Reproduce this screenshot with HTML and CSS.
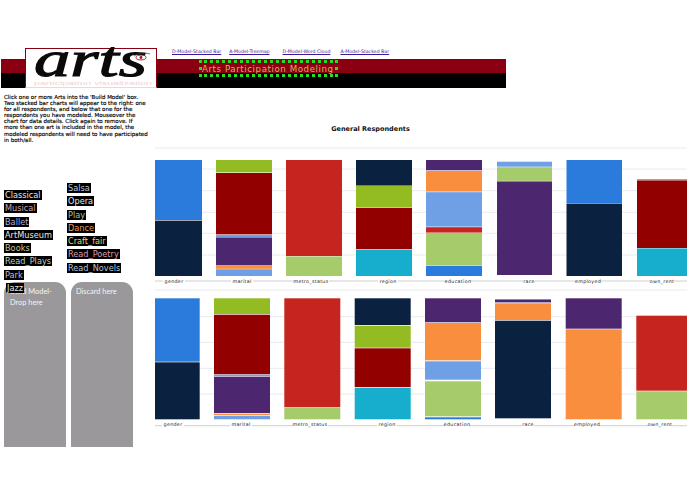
FILE: index.html
```html
<!DOCTYPE html>
<html lang="en">
<head>
<meta charset="utf-8">
<title>Arts Participation Modeling</title>
<link rel="stylesheet" href="styles.css">
</head>
<body>
<header class="header">
  <div class="band band-left"></div>
  <div class="logo">
    <svg class="logo-art" viewBox="0 0 130 38" aria-label="arts logo">
      <text class="logo-word" x="8" y="27" textLength="113" lengthAdjust="spacingAndGlyphs">arts</text>
      <ellipse class="logo-eye" cx="115" cy="8.5" rx="5" ry="2.4"/>
      <circle class="logo-pupil" cx="115" cy="8.5" r="1.4"/>
      <path class="logo-lash" d="M108 7Q115 2 124 5"/>
      <text class="logo-sub" x="8" y="36" textLength="118" lengthAdjust="spacingAndGlyphs">participation visualization</text>
    </svg>
  </div>
  <div class="header-main">
    <nav class="links">
      <a class="link link-a" href="#">D-Model-Stacked Bar</a>
      <a class="link link-b" href="#">A-Model-Treemap</a>
      <a class="link link-c" href="#">D-Model-Word Cloud</a>
      <a class="link" href="#">A-Model-Stacked Bar</a>
    </nav>
    <div class="band band-main">
      <h1 class="site-title">Arts Participation Modeling</h1>
    </div>
  </div>
</header>
<main class="main">
  <aside class="side">
    <p class="intro">Click one or more Arts into the 'Build Model' box.<br>Two stacked bar charts will appear to the right: one<br>for all respondents, and below that one for the<br>respondents you have modeled. Mouseover the<br>chart for data details. Click again to remove. If<br>more than one art is included in the model, the<br>modeled respondents will need to have participated<br>in both/all.</p>
    <div class="arts">
      <div class="art-col art-col-one">
        <span class="art c-white">Classical</span>
        <span class="art c-pink">Musical</span>
        <span class="art c-blue">Ballet</span>
        <span class="art c-white">ArtMuseum</span>
        <span class="art c-tan">Books</span>
        <span class="art c-mint">Read_Plays</span>
        <span class="art c-lilac">Park</span>
        <span class="art art-dropped c-white">Jazz</span>
      </div>
      <div class="art-col">
        <span class="art c-ice">Salsa</span>
        <span class="art c-white">Opera</span>
        <span class="art c-green">Play</span>
        <span class="art c-orange">Dance</span>
        <span class="art c-yellow">Craft_fair</span>
        <span class="art c-rose">Read_Poetry</span>
        <span class="art c-ice">Read_Novels</span>
      </div>
    </div>
    <div class="zones">
      <div class="zone zone-build">Build Model-<br>Drop here</div>
      <div class="zone">Discard here</div>
    </div>
  </aside>
  <section class="charts">
    <h2 class="chart-title">General Respondents</h2>
    <svg class="chart chart-one" viewBox="155 147 533 144">
      <g class="rules">
        <line x1="155" x2="687" y1="148" y2="148"/><line x1="155" x2="687" y1="169" y2="169"/><line x1="155" x2="687" y1="190.7" y2="190.7"/><line x1="155" x2="687" y1="212.3" y2="212.3"/><line x1="155" x2="687" y1="233.3" y2="233.3"/><line x1="155" x2="687" y1="255" y2="255"/><line x1="155" x2="687" y1="290" y2="290"/>
      </g>
      <line class="axis" x1="155" x2="687" y1="281" y2="281"/>
      <rect class="blue" x="155" y="160" width="47" height="60"/><rect class="navy" x="155" y="220.6" width="47" height="55.4"/>
      <rect class="green" x="216" y="160" width="56" height="12.4"/><rect class="maroon" x="216" y="173" width="56" height="61.4"/><rect class="lblue" x="216" y="235" width="56" height="2"/><rect class="purple" x="216" y="237.4" width="56" height="28"/><rect class="orange" x="216" y="265.8" width="56" height="3"/><rect class="lblue" x="216" y="269.2" width="56" height="6.8"/>
      <rect class="red" x="286" y="160" width="56" height="96"/><rect class="lgreen" x="286" y="256.4" width="56" height="19.6"/>
      <rect class="navy" x="356" y="160" width="56" height="25.6"/><rect class="green" x="356" y="186" width="56" height="21.6"/><rect class="maroon" x="356" y="208" width="56" height="41.3"/><rect class="teal" x="356" y="250" width="56" height="26"/>
      <rect class="purple" x="426" y="160" width="56" height="10.3"/><rect class="orange" x="426" y="171" width="56" height="20.6"/><rect class="lblue" x="426" y="192.2" width="56" height="34.4"/><rect class="red" x="426" y="227.2" width="56" height="5.4"/><rect class="lgreen" x="426" y="233" width="56" height="32.3"/><rect class="blue" x="426" y="265.8" width="56" height="10.2"/>
      <rect class="lblue" x="497" y="161.7" width="55" height="5"/><rect class="lgreen" x="497" y="167.2" width="55" height="13.7"/><rect class="purple" x="497" y="181.4" width="55" height="93.6"/>
      <rect class="blue" x="566.5" y="160" width="55.5" height="43"/><rect class="navy" x="566.5" y="203.5" width="55.5" height="72.5"/>
      <rect class="orange" x="637" y="179" width="50" height="1"/><rect class="maroon" x="637" y="180.4" width="50" height="67.6"/><rect class="teal" x="637" y="248.4" width="50" height="27.6"/>
      <g class="labels">
        <rect class="label-bg" x="163" y="278" width="22" height="6"/><text x="174" y="282.5">gender</text>
        <rect class="label-bg" x="231" y="278" width="22" height="6"/><text x="242" y="282.5">marital</text>
        <rect class="label-bg" x="294" y="278" width="35" height="6"/><text x="311" y="282.5">metro_status</text>
        <rect class="label-bg" x="378" y="278" width="20" height="6"/><text x="388" y="282.5">region</text>
        <rect class="label-bg" x="446" y="278" width="24" height="6"/><text x="458" y="282.5">education</text>
        <rect class="label-bg" x="523" y="278" width="12" height="6"/><text x="529" y="282.5">race</text>
        <rect class="label-bg" x="576" y="278" width="24" height="6"/><text x="588" y="282.5">employed</text>
        <rect class="label-bg" x="650" y="278" width="24" height="6"/><text x="662" y="282.5">own_rent</text>
      </g>
    </svg>
    <svg class="chart chart-two" viewBox="155 291 533 139">
      <g class="rules">
        <line x1="155" x2="687" y1="316.7" y2="316.7"/><line x1="155" x2="687" y1="342.3" y2="342.3"/><line x1="155" x2="687" y1="368.3" y2="368.3"/><line x1="155" x2="687" y1="394" y2="394"/>
      </g>
      <line class="axis" x1="155" x2="687" y1="425.7" y2="425.7"/>
      <rect class="blue" x="155" y="298.3" width="44.7" height="63.4"/><rect class="navy" x="155" y="362.3" width="44.7" height="57"/>
      <rect class="green" x="214" y="298.3" width="56" height="15.7"/><rect class="maroon" x="214" y="314.7" width="56" height="59.6"/><rect class="lblue" x="214" y="374.7" width="56" height="1.4"/><rect class="purple" x="214" y="376.7" width="56" height="36.3"/><rect class="orange" x="214" y="413.6" width="56" height="1.7"/><rect class="lblue" x="214" y="416" width="56" height="3.3"/>
      <rect class="red" x="284.3" y="298.3" width="56" height="109"/><rect class="lgreen" x="284.3" y="408" width="56" height="11.3"/>
      <rect class="navy" x="354.7" y="298.3" width="56" height="26.7"/><rect class="green" x="354.7" y="325.7" width="56" height="22"/><rect class="maroon" x="354.7" y="348.3" width="56" height="38.7"/><rect class="teal" x="354.7" y="387.7" width="56" height="31.6"/>
      <rect class="purple" x="425" y="298.3" width="56" height="24"/><rect class="orange" x="425" y="323" width="56" height="37.3"/><rect class="lblue" x="425" y="361.3" width="56" height="18.4"/><rect class="lgreen" x="425" y="381.3" width="56" height="35"/><rect class="blue" x="425" y="417.3" width="56" height="2"/>
      <rect class="lblue" x="495" y="299" width="56" height="0.7"/><rect class="purple" x="495" y="299.7" width="56" height="2.7"/><rect class="orange" x="495" y="303.3" width="56" height="16.7"/><rect class="navy" x="495" y="320.7" width="56" height="97.6"/>
      <rect class="purple" x="565.7" y="298.3" width="56" height="30.4"/><rect class="orange" x="565.7" y="329.3" width="56" height="90"/>
      <rect class="red" x="636.3" y="315.7" width="50.7" height="75"/><rect class="lgreen" x="636.3" y="391.3" width="50.7" height="28"/>
      <g class="labels">
        <rect class="label-bg" x="162" y="421" width="22" height="6"/><text x="173" y="425.5">gender</text>
        <rect class="label-bg" x="230" y="421" width="22" height="6"/><text x="241" y="425.5">marital</text>
        <rect class="label-bg" x="293" y="421" width="35" height="6"/><text x="310" y="425.5">metro_status</text>
        <rect class="label-bg" x="377" y="421" width="20" height="6"/><text x="387" y="425.5">region</text>
        <rect class="label-bg" x="445" y="421" width="24" height="6"/><text x="457" y="425.5">education</text>
        <rect class="label-bg" x="522" y="421" width="12" height="6"/><text x="528" y="425.5">race</text>
        <rect class="label-bg" x="575" y="421" width="24" height="6"/><text x="587" y="425.5">employed</text>
        <rect class="label-bg" x="648" y="421" width="24" height="6"/><text x="660" y="425.5">own_rent</text>
      </g>
    </svg>
  </section>
</main>
</body>
</html>
```
FILE: styles.css
```css
html, body { margin: 0; padding: 0; background: #fff; }
body { width: 695px; height: 494px; overflow: hidden; font-family: "DejaVu Sans", sans-serif; color: #000; }

.header { display: flex; align-items: flex-start; height: 40px; margin: 48px 0 0 1px; width: 505px; }
.band { background: linear-gradient(#8a0012 0, #8a0012 14px, #000 14px, #000 100%); height: 29px; }
.band-left { width: 24px; margin-top: 11px; flex: none; }
.logo { width: 130px; height: 38px; flex: none; background: #fff; border: 1px solid #8a0012; border-bottom-color: #ddd; display: flex; }
.logo-art { width: 130px; height: 38px; display: block; overflow: visible; }
.logo-word { font-family: "Liberation Serif", serif; font-style: italic; font-weight: 400; font-size: 50px; fill: #0a0a0a; stroke: #0a0a0a; stroke-width: 1.1px; }
.logo-sub { font-family: "Liberation Sans", sans-serif; font-size: 6px; fill: #efd2d6; }
.logo-eye { fill: #fff; stroke: #8a0012; stroke-width: .8px; }
.logo-pupil { fill: #a01030; }
.logo-lash { fill: none; stroke: #333; stroke-width: .7px; }

.header-main { flex: 1; min-width: 0; }
.links { display: flex; height: 11px; align-items: flex-start; padding: 0 0 0 15px; font-size: 4.7px; line-height: 7px; }
.link { color: #3c1a9a; text-decoration: underline; white-space: nowrap; }
.link-a { margin-right: 8px; }
.link-b { margin-right: 13px; }
.link-c { margin-right: 10px; }
.band-main { padding: 1px 0 0 42px; box-sizing: border-box; }
.site-title { margin: 0; width: 133px; height: 11px; box-sizing: content-box; border: 3px dotted #22e01e; padding: 0; font-size: 8.7px; line-height: 13px; font-weight: 400; letter-spacing: .55px; color: #dcae58; white-space: nowrap; }

.main { display: grid; grid-template-columns: 155px 533px; }
.side { min-width: 0; }
.intro { margin: 6px 0 0 4px; font-size: 5.5px; line-height: 6.1px; font-weight: 400; color: #000; -webkit-text-stroke: .15px #000; white-space: nowrap; height: 49px; padding-bottom: 0; }
.arts { display: flex; height: 99px; margin-top: 40px; padding-left: 4px; }
.art-col { display: flex; flex-direction: column; align-items: flex-start; gap: 3.3px; width: 63px; flex: none; }
.art-col-one { padding-top: 7px; }
.art { background: #000; font-size: 8.2px; line-height: 10px; height: 10px; white-space: nowrap; padding: 0 1px; }
.art-dropped { margin: 0 0 0 2px; position: relative; z-index: 1; }
.c-white { color: #e4e4e4; }
.c-pink { color: #c8a4ac; }
.c-blue { color: #a8acdc; }
.c-tan { color: #c8c09c; }
.c-mint { color: #b8d0b8; }
.c-lilac { color: #c8b8d8; }
.c-ice { color: #b4c4d8; }
.c-green { color: #9cc894; }
.c-orange { color: #e09c60; }
.c-yellow { color: #dcdc58; }
.c-rose { color: #d89cbc; }

.zones { display: flex; gap: 5px; padding-left: 4px; }
.zone { width: 62px; height: 165px; box-sizing: border-box; background: #9a989a; border-radius: 11px 11px 0 0; color: #f4f4f4; font-family: Lato, sans-serif; font-size: 7.4px; line-height: 10.5px; padding: 5px 0 0 5px; }
.zone-build { padding-left: 6px; }

.charts { min-width: 0; }
.chart-title { margin: 36px 0 13px 0; padding-right: 102px; height: 10px; font-size: 6.5px; line-height: 10px; text-align: center; font-weight: 700; color: #111; }
.chart { display: block; }
.chart-one { width: 533px; height: 144px; }
.chart-two { width: 533px; height: 139px; }
.rules line { stroke: #e9eaee; stroke-width: 1px; }
.axis { stroke: #b8babe; stroke-width: .7px; }
.labels text { font-size: 4.8px; fill: #222; text-anchor: middle; letter-spacing: .3px; }
.label-bg { fill: #fff; }
.blue { fill: #2a7bdc; }
.navy { fill: #0a2240; }
.green { fill: #92bc22; }
.maroon { fill: #930000; }
.purple { fill: #4d2670; }
.orange { fill: #f88e3e; }
.lblue { fill: #6f9fe4; }
.red { fill: #c6251f; }
.lgreen { fill: #a6cb6a; }
.teal { fill: #17aece; }
```
